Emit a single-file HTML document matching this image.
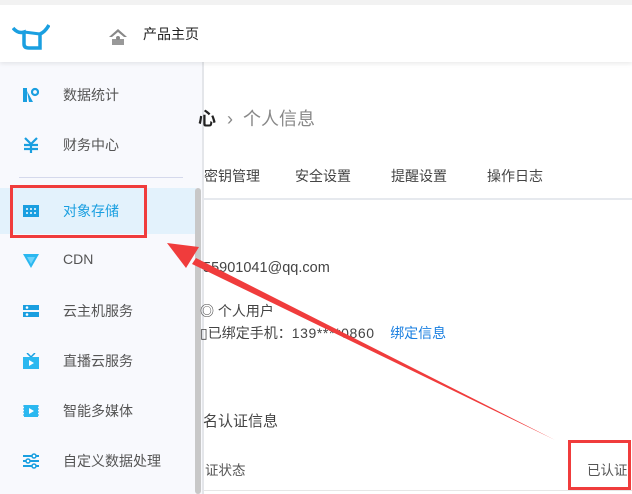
<!DOCTYPE html>
<html><head><meta charset="utf-8"><style>
*{margin:0;padding:0;box-sizing:border-box}
body{width:632px;height:494px;overflow:hidden;background:#fff;font-family:"Liberation Sans","Noto Sans CJK SC",sans-serif;position:relative;color:#333}
.abs{position:absolute}
.hdr{left:0;top:0;width:632px;height:62px;background:#fff;border-top:5px solid #f2f2f2;box-shadow:0 2px 4px rgba(0,0,0,.08);z-index:3}
.side{left:0;top:62px;width:203px;height:432px;background:#f8f9fd;border-right:1px solid #e4e6ea}
.item{position:absolute;left:0;width:196px;height:40px;font-size:14px;color:#555}
.item span{position:absolute;left:63px;top:10px}
.ic{position:absolute;left:23px;top:12px;width:16px;height:16px}
.t{font-size:14px;color:#444}
</style></head><body>
<div class="abs hdr">
<svg class="abs" style="left:12px;top:17px" width="38" height="30" viewBox="0 0 38 30"><path d="M1 6 Q6 12 12 10 L12 22 Q12 26 17 26 L28 26 L28 12 Q33 10 37 3" fill="none" stroke="#1a9fe0" stroke-width="3.5"/><path d="M12 10 L28 12" stroke="#1a9fe0" stroke-width="3"/></svg>
<svg class="abs" style="left:108px;top:23px" width="20" height="18" viewBox="0 0 20 18"><path d="M1 9 L10 1 L19 9 L16 9 L10 4 L4 9Z" fill="#888"/><rect x="4" y="11" width="12" height="6" fill="#999"/><circle cx="10" cy="10" r="2" fill="#888"/></svg>
<div class="abs t" style="left:143px;top:19px;color:#222">产品主页</div>
</div>
<div class="abs side">
<div class="item" style="top:13px"><svg class="ic" viewBox="0 0 16 16"><path d="M0 1h4v14H0z M4 4l6 11h-4z" fill="#1a9fe0"/><circle cx="12" cy="5" r="3" fill="none" stroke="#1a9fe0" stroke-width="2.2"/></svg><span>数据统计</span></div>
<div class="item" style="top:63px"><svg class="ic" viewBox="0 0 16 16"><path d="M2 1l6 6 6-6M1 8h14M1 12h14M8 7v9" stroke="#1a9fe0" stroke-width="2.2" fill="none"/></svg><span>财务中心</span></div>
<div class="abs" style="left:19px;top:115px;width:164px;height:1px;background:#d5d9ec"></div>
<div class="item" style="top:126px;height:46px;background:#e3f2fc;width:196px"><svg class="ic" style="top:15px" viewBox="0 0 16 16"><rect x="0" y="2" width="16" height="12" fill="#1a9fe0"/><path d="M3 6h2M7 6h2M11 6h2M3 10h2M7 10h2M11 10h2" stroke="#fff" stroke-width="1.6"/></svg><span style="top:13px;color:#1a9fe0">对象存储</span></div>
<div class="item" style="top:179px"><svg class="ic" viewBox="0 0 16 16"><path d="M0 1h16L8 15z" fill="#2bb8f0"/><path d="M4 4h8L8 11z" fill="#6fd3fa"/></svg><span>CDN</span></div>
<div class="item" style="top:229px"><svg class="ic" viewBox="0 0 16 16"><rect y="2" width="16" height="5" fill="#1a9fe0"/><rect y="9" width="16" height="5" fill="#1a9fe0"/><circle cx="4" cy="4.5" r="1.3" fill="#fff"/><circle cx="4" cy="11.5" r="1.3" fill="#fff"/></svg><span>云主机服务</span></div>
<div class="item" style="top:279px"><svg class="ic" viewBox="0 0 16 16"><path d="M4 0l4 4 4-4" stroke="#1a9fe0" stroke-width="1.5" fill="none"/><rect y="4" width="16" height="12" fill="#2bb8f0"/><path d="M6 7v6l5-3z" fill="#fff"/></svg><span>直播云服务</span></div>
<div class="item" style="top:329px"><svg class="ic" viewBox="0 0 16 16"><rect x="1" y="2" width="14" height="12" fill="#2bb8f0"/><path d="M0 3h1M0 6h1M0 9h1M0 12h1M15 3h1M15 6h1M15 9h1M15 12h1" stroke="#1a9fe0"/><path d="M6 5v6l5-3z" fill="#fff"/></svg><span>智能多媒体</span></div>
<div class="item" style="top:379px"><svg class="ic" viewBox="0 0 16 16"><path d="M0 3h16M0 8h16M0 13h16" stroke="#1a9fe0" stroke-width="2"/><circle cx="11" cy="3" r="2" fill="#fff" stroke="#1a9fe0" stroke-width="1.5"/><circle cx="5" cy="8" r="2" fill="#fff" stroke="#1a9fe0" stroke-width="1.5"/><circle cx="11" cy="13" r="2" fill="#fff" stroke="#1a9fe0" stroke-width="1.5"/></svg><span>自定义数据处理</span></div>
</div>
<div class="abs" style="left:195px;top:188px;width:6px;height:306px;background:#c8c8c8;border-radius:3px"></div>
<div class="abs" style="left:203px;top:62px;width:1px;height:432px;background:#e4e6ea"></div>
<div class="abs" style="left:198px;top:105px;font-size:18px;color:#222;font-weight:bold">心</div>
<div class="abs" style="left:227px;top:105px;font-size:18px;color:#888">›&nbsp; 个人信息</div>
<div class="abs t" style="left:204px;top:166px;font-size:14px">密钥管理</div>
<div class="abs t" style="left:295px;top:166px;font-size:14px">安全设置</div>
<div class="abs t" style="left:391px;top:166px;font-size:14px">提醒设置</div>
<div class="abs t" style="left:487px;top:166px;font-size:14px">操作日志</div>
<div class="abs" style="left:204px;top:198px;width:428px;height:2px;background:#e6e9ee"></div>
<div class="abs t" style="left:203px;top:260px;font-size:14.5px">55901041@qq.com</div>
<div class="abs" style="left:200px;top:301px;font-size:14px;color:#444">◎ 个人用户</div>
<div class="abs" style="left:200px;top:323px;font-size:14px;color:#444;white-space:nowrap">▯已绑定手机：<span style="letter-spacing:.6px">139****0860</span> &nbsp;&nbsp; <span style="color:#1a7fe0">绑定信息</span></div>
<div class="abs" style="left:203px;top:410px;font-size:15px;color:#444">名认证信息</div>
<div class="abs t" style="left:205px;top:459px;font-size:13.5px;color:#555">证状态</div>
<div class="abs t" style="left:587px;top:459px;font-size:13.5px;color:#555">已认证</div>
<div class="abs" style="left:204px;top:490px;width:428px;height:1px;background:#e6e6e6"></div>
<div class="abs" style="left:10px;top:185px;width:137px;height:53px;border:3px solid #f03c3c"></div>
<div class="abs" style="left:568px;top:440px;width:63px;height:50px;border:3px solid #f03c3c"></div>
<svg class="abs" style="left:0;top:0" width="632" height="494"><polygon points="555,440 196,258 192,264" fill="#f03c3c"/><polygon points="167,243 199,247 186,268" fill="#f03c3c"/></svg>
</body></html>
